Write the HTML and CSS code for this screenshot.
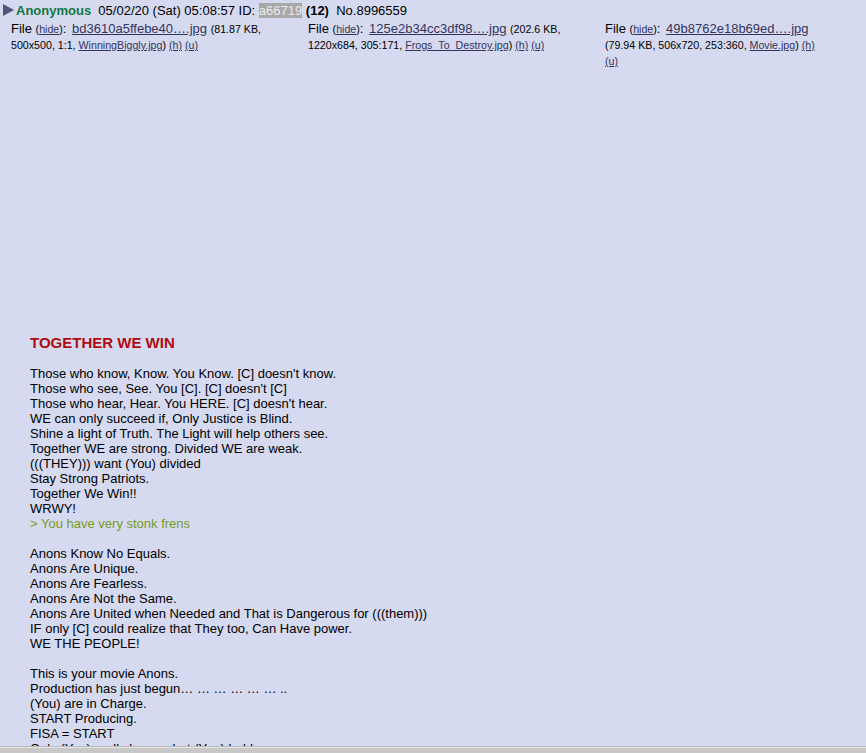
FILE: index.html
```html
<!DOCTYPE html>
<html lang="en">
<head>
<meta charset="utf-8">
<title>No.8996559</title>
<link rel="stylesheet" href="styles.css">
</head>
<body>
<div class="post">
  <div class="intro"><svg class="arrow" width="11" height="12" viewBox="0 0 11 12"><polygon points="0,0 11,6 0,12" fill="#54547a"/></svg><span class="name">Anonymous</span>&nbsp; <time>05/02/20 (Sat) 05:08:57</time> ID: <span class="poster-id">a66719</span> <b>(12)</b>&nbsp; <a class="post-no">No.8996559</a></div>
  <div class="files">
    <div class="file">
      <p class="fileinfo">File <span class="small">(<a class="link">hide</a>)</span>: <a class="link fname">bd3610a5ffebe40….jpg</a> <span class="small">(81.87 KB, 500x500, 1:1, <a class="link">WinningBiggly.jpg</a>) <a class="link">(h)</a> <a class="link">(u)</a></span></p>
      <div class="thumb thumb-square"></div>
    </div>
    <div class="file">
      <p class="fileinfo">File <span class="small">(<a class="link">hide</a>)</span>: <a class="link fname">125e2b34cc3df98….jpg</a> <span class="small">(202.6 KB, 1220x684, 305:171, <a class="link">Frogs_To_Destroy.jpg</a>) <a class="link">(h)</a> <a class="link">(u)</a></span></p>
      <div class="thumb thumb-wide"></div>
    </div>
    <div class="file file-last">
      <p class="fileinfo">File <span class="small">(<a class="link">hide</a>)</span>: <a class="link fname">49b8762e18b69ed….jpg</a> <span class="small">(79.94 KB, 506x720, 253:360, <a class="link">Movie.jpg</a>) <a class="link">(h)</a> <a class="link">(u)</a></span></p>
      <div class="thumb thumb-tall"></div>
    </div>
  </div>
  <div class="body"><span class="heading">TOGETHER WE WIN</span><br><br>Those who know, Know. You Know. [C] doesn't know.<br>Those who see, See. You [C]. [C] doesn't [C]<br>Those who hear, Hear. You HERE. [C] doesn't hear.<br>WE can only succeed if, Only Justice is Blind.<br>Shine a light of Truth. The Light will help others see.<br>Together WE are strong. Divided WE are weak.<br>(((THEY))) want (You) divided<br>Stay Strong Patriots.<br>Together We Win!!<br>WRWY!<br><span class="quote">&gt; You have very stonk frens</span><br><br>Anons Know No Equals.<br>Anons Are Unique.<br>Anons Are Fearless.<br>Anons Are Not the Same.<br>Anons Are United when Needed and That is Dangerous for (((them)))<br>IF only [C] could realize that They too, Can Have power.<br>WE THE PEOPLE!<br><br>This is your movie Anons.<br>Production has just begun… … … … … … ..<br>(You) are in Charge.<br>START Producing.<br>FISA = START<br>Only (You) really know what (You) hold.<br>Enjoy the show.</div>
</div>
<div class="bottom-bar"></div>
</body>
</html>
```
FILE: styles.css
```css
html, body {
  margin: 0;
  padding: 0;
  overflow: hidden;
}

body {
  background: #d6daf0;
  color: #000;
  font-family: "Liberation Sans", Arial, sans-serif;
  font-size: 13px;
  height: 753px;
}

.post {
  padding: 3px 0 0 3px;
}

.intro {
  line-height: 16px;
  height: 16px;
  white-space: nowrap;
}

.arrow {
  display: inline-block;
  vertical-align: top;
  margin-top: 1px;
  margin-right: 2px;
}

.name {
  color: #117743;
  font-weight: bold;
}

.poster-id {
  background: #a8a8a8;
  color: #ececec;
}

.post-no {
  color: #000;
  text-decoration: none;
}

.files {
  display: flex;
  align-items: flex-start;
  margin: 2px 0 0 8px;
}

.file {
  width: 287px;
  margin-right: 10px;
}

.file-last {
  width: 215px;
  margin-right: 0;
}

.fileinfo {
  margin: 0;
  line-height: 16px;
}

.small {
  font-size: 10.67px;
  line-height: 1;
}

.link {
  color: #34345c;
  text-decoration: underline;
}

.fname {
  margin-left: 2px;
}

.thumb-square {
  height: 255px;
}

.thumb-wide {
  height: 143px;
}

.thumb-tall {
  height: 254px;
}

.body {
  margin: 12px 0 0 27px;
  line-height: 15px;
  white-space: nowrap;
}

.heading {
  color: #af0a0f;
  font-size: 15px;
  font-weight: bold;
}

.quote {
  color: #789922;
}

.bottom-bar {
  position: fixed;
  left: 0;
  right: 0;
  bottom: 0;
  height: 5px;
  background: #c8c8c8;
  border-top: 1px solid #e4e4e4;
  box-shadow: 0 -1px 0 #bcbcbc;
}
```
